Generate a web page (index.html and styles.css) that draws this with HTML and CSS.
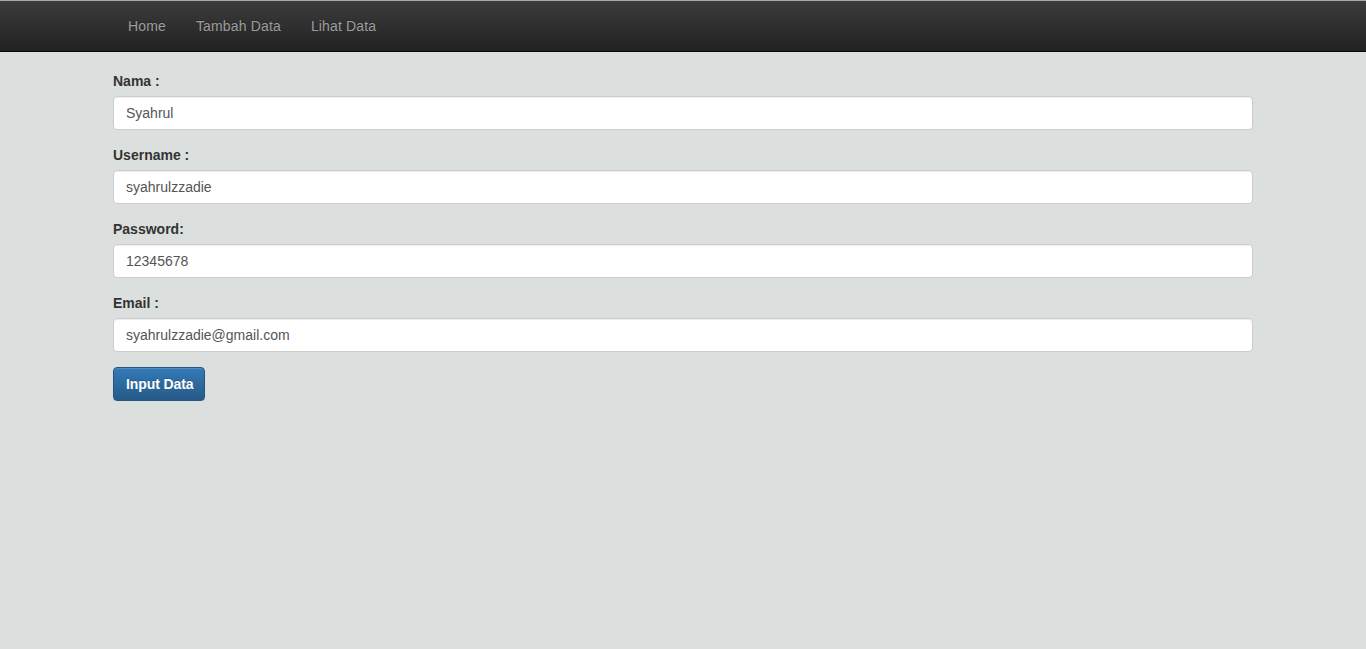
FILE: index.html
```html
<!DOCTYPE html>
<html>
<head>
<meta charset="utf-8">
<title>Input Data</title>
<link rel="stylesheet" href="styles.css">
</head>
<body>
<nav class="navbar">
  <div class="container">
    <ul class="nav">
      <li><a href="#">Home</a></li>
      <li><a href="#">Tambah Data</a></li>
      <li><a href="#">Lihat Data</a></li>
    </ul>
  </div>
</nav>
<div class="container">
  <form class="form">
    <div class="form-group">
      <label>Nama :</label>
      <input class="form-control" type="text" value="Syahrul">
    </div>
    <div class="form-group">
      <label>Username :</label>
      <input class="form-control" type="text" value="syahrulzzadie">
    </div>
    <div class="form-group">
      <label>Password:</label>
      <input class="form-control" type="text" value="12345678">
    </div>
    <div class="form-group">
      <label>Email :</label>
      <input class="form-control" type="text" value="syahrulzzadie@gmail.com">
    </div>
    <button type="button" class="btn">Input Data</button>
  </form>
</div>
</body>
</html>
```
FILE: styles.css
```css
* { box-sizing: border-box; }
html, body { margin: 0; padding: 0; }
body {
  background: #dbe0de;
  font-family: "Liberation Sans", Arial, sans-serif;
  font-size: 14px;
  line-height: 20px;
  color: #333;
}
.container {
  width: 1170px;
  margin: 0 auto;
  padding: 0 15px;
}
.navbar {
  height: 52px;
  border-top: 1px solid #a8a8a8;
  border-bottom: 1px solid #080808;
  background: linear-gradient(to bottom, #3c3c3c 0%, #222222 100%);
  margin-bottom: 19px;
}
.nav {
  list-style: none;
  margin: 0;
  padding: 0;
  display: flex;
}
.nav a {
  display: block;
  padding: 15px;
  line-height: 20px;
  color: #9d9d9d;
  text-decoration: none;
  letter-spacing: 0.15px;
  text-shadow: 0 -1px 0 rgba(0,0,0,.25);
}
.form-group { margin-bottom: 15px; }
label {
  display: block;
  font-weight: bold;
  margin-bottom: 5px;
  color: #333;
}
.form-control {
  display: block;
  width: 100%;
  height: 34px;
  padding: 6px 12px;
  font-family: "Liberation Sans", Arial, sans-serif;
  font-size: 14px;
  line-height: 20px;
  color: #555;
  background: #fff;
  border: 1px solid #ccc;
  border-radius: 4px;
  box-shadow: inset 0 1px 1px rgba(0,0,0,.075);
  outline: none;
}
.btn {
  display: block;
  height: 34px;
  padding: 6px 11px 6px 12px;
  font-family: "Liberation Sans", Arial, sans-serif;
  font-size: 14px;
  line-height: 20px;
  font-weight: bold;
  letter-spacing: -0.1px;
  color: #fff;
  text-shadow: 0 -1px 0 rgba(0,0,0,.2);
  background: linear-gradient(to bottom, #337ab7 0%, #265a88 100%);
  border: 1px solid #245580;
  border-radius: 4px;
  box-shadow: inset 0 1px 0 rgba(255,255,255,.15), 0 1px 1px rgba(0,0,0,.075);
  cursor: pointer;
}
```
